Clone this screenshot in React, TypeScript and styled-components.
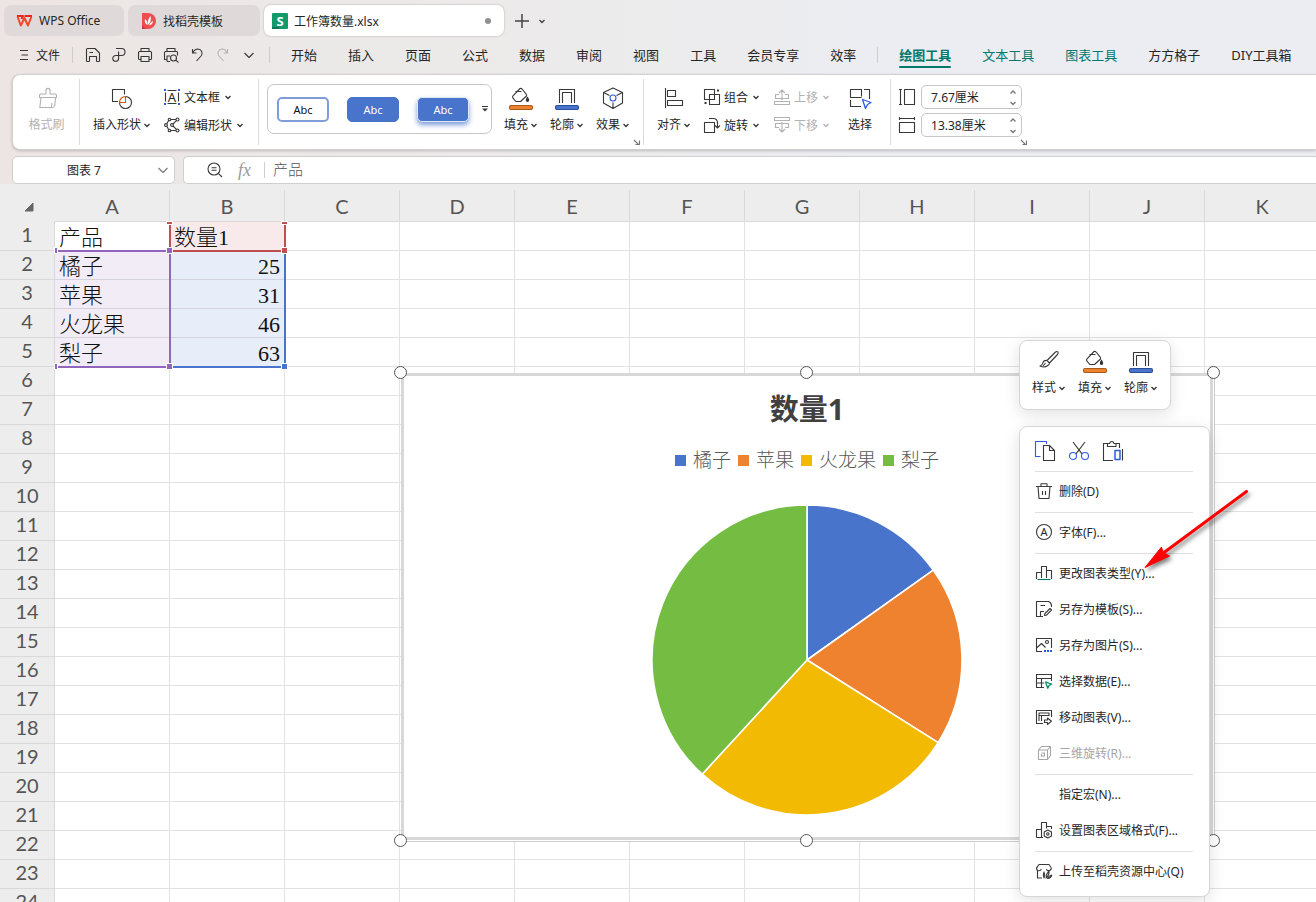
import React from "react";
import styled, { createGlobalStyle, css } from "styled-components";

const UI_FONT = `"Noto Sans", "Noto Sans CJK SC", sans-serif`;
const CELL_FONT = `"Liberation Serif", "Noto Sans CJK SC", serif`;
const INK = "#262626";
const MUTED = "#b2b2b2";
const BLUE = "#4874cb";
const ORANGE = "#ee822f";
const YELLOW = "#f2ba02";
const GREEN = "#75bd42";
const ACCENT = "#00796b";

const GlobalStyle = createGlobalStyle`
  *, *::before, *::after { box-sizing: border-box; }
  body { margin: 0; font-family: ${UI_FONT}; font-size: 12px; color: ${INK}; }
  button, input { font-family: inherit; font-size: inherit; color: inherit; }
  button { border: 0; padding: 0; background: none; cursor: default; }
  svg { display: block; flex: none; }
`;

/* ---------- icons ---------- */

const icons: Record<string, React.ReactNode> = {
  save: (
    <>
      <path d="M1.500 14.500V2.500a1 1 0 0 1 1-1H10L14.500 6V14.500" />
      <path d="M4.500 14.500V9.500H11.500V14.500M4.500 5.500H8M1.500 14.500H4.500M11.500 14.500H14.500" />
    </>
  ),
  share: <path d="M5 1.500H10.500a3.500 3.500 0 0 1 0 7H4.700a2.900 2.900 0 1 0 2.900 2.900V4.500" />,
  print: (
    <>
      <path d="M4 4.500V1.500H12V4.500M4 12.500H2.500a1 1 0 0 1-1-1V5.500a1 1 0 0 1 1-1H13.500a1 1 0 0 1 1 1v6a1 1 0 0 1-1 1H12" />
      <path d="M4 9.500H12V14.500H4Z" />
    </>
  ),
  preview: (
    <>
      <path d="M4 4.500V1.500H12V4.500M4 12.500H1.500V5.500a1 1 0 0 1 1-1H13.500a1 1 0 0 1 1 1v3M4 14.500V9H7M4 14.500H7" />
      <circle cx="10.500" cy="11" r="3" />
      <path d="M12.800 13.200 15.500 15.500" />
    </>
  ),
  undo: <path d="M3.500 2V6H7.500M3.800 6Q5.500 2 9 2A4.300 4.300 0 0 1 12.500 8.500L7.500 14" />,
  redo: <path d="M12.500 2V6H8.500M12.200 6Q10.500 2 7 2A4.300 4.300 0 0 0 3.500 8.500L8.500 14" />,
  more: <path d="M3.500 6 8 10.500 12.500 6" />,
  burger: <path d="M1 .5H9M2.500 5H9M1 9.500H9" />,
  brush: (
    <>
      <path d="M10 7V4.500a2.200 2.200 0 1 1 4 0V7h5a1.500 1.500 0 0 1 1.500 1.500V10.500H3.500V8.500A1.500 1.500 0 0 1 5 7Z" />
      <path d="M5 10.500 3.800 20.500H16.500Q18.500 20.500 18.800 18.500L19.500 10.500M16 16 15.500 20" />
    </>
  ),
  shapes: (
    <>
      <path d="M13.500 7.500V2.500H1.500V14.500H7" />
      <path d="M14.500 9.500A6 6 0 1 1 8.500 15.500" />
      <path stroke="#d4551a" d="M14.500 9.500V15.500H8.500A6 6 0 0 1 14.500 9.500Z" />
    </>
  ),
  textbox: (
    <>
      <path d="M1.500 3.500V12.500M14.500 3.500V12.500M3.500 1.500H12.500M3.500 14.500H12.500" />
      <text x="8" y="12.500" textAnchor="middle" fontSize="13" stroke="none" fill={INK}>A</text>
      <g fill="#2b5ce0" stroke="none">
        <path d="M0 0H2V2H0ZM14 0H16V2H14ZM0 14H2V16H0ZM14 14H16V16H14Z" />
      </g>
    </>
  ),
  editshape: (
    <>
      <path d="M6.800 2.500H12M4.600 3.600 2.800 6.800M2.800 9.200 4.600 12.400M6.800 13.500H12M12.400 3.700 9 7M9 9 12.400 12.300" />
      <circle cx="5.500" cy="2.500" r="1.300" />
      <circle cx="13.500" cy="2.500" r="1.500" />
      <circle cx="2" cy="8" r="1.400" />
      <circle cx="8" cy="8" r="1.400" />
      <circle cx="5.500" cy="13.500" r="1.300" />
      <circle cx="13.500" cy="13.500" r="1.500" />
    </>
  ),
  fill: (
    <>
      <path d="M5.500 4.500H11.500M10 1.500 3 8.800Q2 10 3 11.200L5.800 14.500H10.500L16.500 9Q17 8 16 6.800L12.500 2.500Q11.200 1 10 1.500Z" />
      <path fill="#333" stroke="none" d="M17.500 9.500c1 1.500 1.700 2.800 1.700 3.700a1.700 1.700 0 0 1-3.400 0c0-.9.700-2.200 1.700-3.700Z" />
      <rect x="-.5" y="18.500" width="23" height="4" rx="1.500" fill={ORANGE} stroke="#a85a1c" />
    </>
  ),
  outline: (
    <>
      <path d="M3.500 16V2.500H18.500V16M6.500 16V5.500H15.500V16" />
      <rect x="-.5" y="18.500" width="23" height="4" rx="1.500" fill={BLUE} stroke="#2c4f96" />
    </>
  ),
  effect: (
    <>
      <path d="M11 1 20.500 5.500V16L11 21.500 1.500 16V5.500ZM1.500 5.500 7.500 8.500M20.500 5.500 14.500 8.500M11 15.500V21.500" />
      <circle cx="11" cy="11" r="3" stroke="#2b5ce0" />
    </>
  ),
  align: <path d="M2.500 1V21M4.500 3.500H12.500V9.500H4.500ZM4.500 13.500H19.500V18.500H4.500Z" />,
  group: (
    <>
      <path d="M5.500 5.500H15.500V15.500H5.500ZM.5 .5H10.500V10.500H.5Z" />
      <path strokeWidth="2" d="M13 1.500H15M.5 14H2.500" />
    </>
  ),
  rotate: <path d="M.5 5.500H10.500V15.500H.5ZM5 1.500H9Q13.500 1.500 13.500 6V10.500M11 8.500 13.500 11 16 8.500" />,
  up: <path d="M8 11V1M5 4 8 1 11 4M5 5.500H1.500V9.500H14.500V5.500H11M.5 12.500H15.500V15.500H.5Z" />,
  down: <path d="M8 5V15M5 12 8 15 11 12M5 10.500H1.500V6.500H14.500V10.500H11M.5 .5H15.500V3.500H.5Z" />,
  select: (
    <>
      <path d="M12.500 2V9.500M15 2.500H20.500V12M12.500 2.500H1.500V10.500H12.500M1.500 13V19.500H12" />
      <path stroke="#2b5ce0" strokeWidth="1.300" d="M13.500 12.500 22 15.500 18.500 17.500 16.500 21.500Z" />
    </>
  ),
  height: <path d="M0 .5H3M1.500 .5V15.500M0 15.500H3M5.500 .5H15.500V15.500H5.500Z" />,
  width: <path d="M.5 0V3M.5 1.500H15.500M15.500 0V3M.5 5.500H15.500V15.500H.5Z" />,
  launcher: <path d="M0 1 4.500 5.500M5.500 1.500V5.500H1.500" />,
  zoomout: (
    <>
      <circle cx="7" cy="7" r="6" />
      <path d="M4.500 5.800H9.500M4.500 8.200H9.500M11.300 11.300 15 15" />
    </>
  ),
  paint: (
    <path d="M9 10.500 17.500 2Q19 1 20 2 20.500 3 19.500 4.500L11.500 13ZM9 10.500Q6 10 5 12.500 4.500 15 2 16 6 18 9.500 15.800 11.500 14.500 11.500 13M5 16 7.500 13" />
  ),
  copy: (
    <>
      <path stroke="#2b5ce0" d="M12.500 4V1.500H1.500V16.500H6.500" />
      <path d="M9.500 5.500H15.500L20.500 10.500V20.500H9.500ZM15.500 5.500V10.500H20.500" />
    </>
  ),
  cut: (
    <>
      <path d="M5 2 14 13.800M17 2 8 13.800" />
      <g stroke="#2b5ce0">
        <circle cx="5" cy="16" r="3.500" />
        <circle cx="17" cy="16" r="3.500" />
      </g>
    </>
  ),
  paste: (
    <>
      <path d="M6 3.500H1.500V20.500H11M14 3.500H17.500V8M5.500 6.500V3.500H7.500Q8 1.500 9.800 1.500 11.500 1.500 12 3.500H14V6.500Z" />
      <path d="M20.500 9V20.500" />
      <rect x="13" y="10.500" width="5" height="9" stroke="#2b5ce0" strokeWidth="1.500" />
    </>
  ),
  trash: <path d="M0 3.500H16M5 3.500V.8H11V3.500M2 3.500 3 15.500H13L14 3.500M6.500 8V12M9.500 8V12" />,
  font: (
    <>
      <circle cx="8" cy="8" r="7.500" />
      <text x="8" y="12" textAnchor="middle" fontSize="11" stroke="none" fill={INK}>A</text>
    </>
  ),
  chart: (
    <>
      <path d="M.5 14V7.500H5.500M5.500 13V1.500H10.500V13M10.500 5.500H15.500V14" />
      <path stroke={ACCENT} d="M1.500 14.500H14.500" />
    </>
  ),
  template: (
    <path d="M7 15.500H.5V.5H12.500Q15.500 1.500 15.500 5V6M4.500 15V10.500H8M4.500 4.500H9M8.500 14.500 9 12.500 14 7.500 15.500 9 10.500 14.200Z" />
  ),
  image: (
    <>
      <path d="M6 14.500H.5V1.500H15.500V11M.5 11 5.500 6.500 9.500 10.500" />
      <circle cx="11" cy="5" r="1.500" />
      <path stroke="#2b5ce0" strokeWidth="2" strokeDasharray="2 1" d="M8 14H16" />
    </>
  ),
  data: (
    <>
      <path d="M8 14.500H.5V1.500H15.500V8M.5 5.500H15.500M.5 10H8M5.500 5.500V14.500" />
      <path stroke="#0b8f68" strokeWidth="1.300" d="M9.500 9 15.500 11.200 13 12.500 11.800 15.200Z" />
    </>
  ),
  move: (
    <path d="M7 14.500H.5V1.500H15.500V8M3 12V4H13V7M3 6.500H13M5.500 6.500V12M8.500 11V13.500H11.500V15.500L15.500 12.200 11.500 9V11Z" />
  ),
  cube: (
    <path d="M2.500 5 5.500 1.500H14.500V10.500L11.500 14.500H2.500ZM2.500 5H11.500V14.500M11.500 5 14.500 1.500M5.500 8H8.500V11H5.500V9M6 11.500 5 10.500" />
  ),
  format: (
    <>
      <path d="M.5 15.500V7.500H5.500M7 15.500H.5M5.500 15.500V.5H10.500V6.500M10.500 4.500H15.500V7" />
      <path d="M11.800 8 15.500 10V14L11.800 16 8.200 14V10Z" />
      <circle cx="11.800" cy="12" r="1.200" />
    </>
  ),
  upload: (
    <>
      <path d="M6 15H1.500V7.500Q-.5 5.500 1.500 3.500L3 1.500H13L14.500 3.500Q16.500 6 13.500 7.500 11 8.200 10.500 6M1.500 7.500Q4 8.500 5.500 6" />
      <path d="M8 15Q6.500 12 8 9 9.500 12 8 15ZM10 15Q10 11 13 8 13.500 12 10 15ZM11.500 15.500Q13 12.500 15.800 12 15 15 11.500 15.500Z" />
    </>
  ),
};

type IconProps = { name: string; size?: number; color?: string };

const Icon = ({ name, size = 16, color = "#383838" }: IconProps) => (
  <svg
    width={size}
    height={size}
    viewBox={`0 0 ${size} ${size}`}
    fill="none"
    stroke={color}
    strokeWidth="1.100"
    strokeLinejoin="round"
    overflow="visible"
    aria-hidden="true"
  >
    {icons[name]}
  </svg>
);

const Caret = ({ color = "#383838", up = false }: { color?: string; up?: boolean }) => (
  <svg width="8" height="8" viewBox="0 0 8 8" fill="none" stroke={color} strokeWidth="1.400" aria-hidden="true">
    <path d={up ? "M1.500 5.500 4 3 6.500 5.500" : "M1.500 3 4 5.500 6.500 3"} />
  </svg>
);

/* ---------- window chrome ---------- */

const Window = styled.div`
  display: flex;
  flex-direction: column;
  height: 100vh;
  overflow: hidden;
  background: linear-gradient(90deg, #ede5e4 0, #ebe9e8 25%, #ecebeb 45%, #ecedf2 68%);
`;

const TabStrip = styled.header`
  display: flex;
  align-items: center;
  gap: 4px;
  flex: none;
  padding: 5px 4px 0;
`;

const Tab = styled.button<{ $width: number; $active?: boolean }>`
  display: flex;
  align-items: center;
  gap: 6px;
  width: ${(p) => p.$width}px;
  height: 31px;
  padding: 0 12px;
  border-radius: 7px;
  background: #dfdad9;
  white-space: nowrap;
  ${(p) =>
    p.$active &&
    css`
      padding: 0 13px 0 8px;
      background: #fff;
      box-shadow: 0 0 2px rgba(0, 0, 0, 0.3);
    `}
`;

const Dirty = styled.span`
  width: 6px;
  height: 6px;
  margin-left: auto;
  border-radius: 50%;
  background: #8f8f8f;
`;

const NewTab = styled.button`
  display: flex;
  align-items: center;
  gap: 8px;
  margin-left: 6px;
`;

const MenuBar = styled.div`
  display: flex;
  align-items: center;
  flex: none;
  height: 38px;
  padding-left: 19px;
  white-space: nowrap;
`;

const FileButton = styled.button`
  display: flex;
  align-items: center;
  gap: 7px;
`;

const Rule = styled.span<{ $before: number; $after: number }>`
  flex: none;
  width: 1px;
  height: 16px;
  margin: 0 ${(p) => p.$after}px 0 ${(p) => p.$before}px;
  background: #cfcccc;
`;

const QuickTools = styled.div`
  display: flex;
  gap: 10px;
`;

const Menus = styled.nav`
  display: flex;
  gap: 31px;
`;

const MenuTab = styled.button<{ $accent?: boolean; $current?: boolean }>`
  position: relative;
  height: 26px;
  font-size: 13px;
  line-height: 26px;
  color: ${(p) => (p.$accent ? ACCENT : INK)};
  font-weight: ${(p) => (p.$current ? 700 : 400)};
  ${(p) =>
    p.$current &&
    css`
      &::after {
        content: "";
        position: absolute;
        left: 0;
        right: 0;
        bottom: 0;
        height: 2px;
        border-radius: 1px;
        background: ${ACCENT};
      }
    `}
`;

/* ---------- ribbon ---------- */

const Ribbon = styled.section`
  display: flex;
  flex: none;
  height: 76px;
  margin-left: 12px;
  padding: 4px 0;
  border: 1px solid #d3d0d0;
  border-right: 0;
  border-radius: 8px 0 0 8px;
  background: #fff;
  box-shadow: 0 1px 3px rgba(0, 0, 0, 0.2);
  white-space: nowrap;
`;

const Group = styled.div<{ $left?: number; $right?: number; $last?: boolean }>`
  position: relative;
  display: flex;
  padding: 0 ${(p) => p.$right ?? 0}px 0 ${(p) => p.$left ?? 0}px;
  border-right: ${(p) => (p.$last ? 0 : 1)}px solid #dbdbdb;
`;

const BigButton = styled.button<{ $width: number; $muted?: boolean }>`
  display: flex;
  flex-direction: column;
  align-items: center;
  gap: 8px;
  width: ${(p) => p.$width}px;
  padding-top: 8px;
  color: ${(p) => (p.$muted ? MUTED : INK)};
`;

const Label = styled.span`
  display: flex;
  align-items: center;
  gap: 2px;
  line-height: 16px;
`;

const Stack = styled.div<{ $left?: number; $right?: number }>`
  display: flex;
  flex-direction: column;
  padding-top: 4px;
  margin: 0 ${(p) => p.$right ?? 0}px 0 ${(p) => p.$left ?? 0}px;
`;

const RowButton = styled.button<{ $muted?: boolean }>`
  display: flex;
  align-items: center;
  gap: 4px;
  height: 28px;
  color: ${(p) => (p.$muted ? MUTED : INK)};
`;

const Gallery = styled.div`
  display: flex;
  align-items: center;
  gap: 18px;
  height: 50px;
  margin: 5px 6px 0 0;
  padding: 0 2px 0 9px;
  border: 1px solid #c6c6c6;
  border-radius: 7px;
`;

const Swatch = styled.button<{ $look: "outline" | "solid" | "raised" }>`
  width: 52px;
  height: 25px;
  border: 1px solid ${BLUE};
  border-radius: 5px;
  font-size: 11px;
  color: #fff;
  background: ${BLUE};
  ${(p) =>
    p.$look === "outline" &&
    css`
      border: 2px solid #7f9ddb;
      background: #fff;
      color: #111;
    `}
  ${(p) =>
    p.$look === "raised" &&
    css`
      border-color: #dfe7f7;
      box-shadow: 0 3px 5px rgba(72, 116, 203, 0.7);
    `}
`;

const GalleryMore = styled.button`
  margin-left: -6px;
`;

const Launcher = styled.button`
  position: absolute;
  right: 3px;
  bottom: 0;
`;

const SizeRow = styled.label`
  display: flex;
  align-items: center;
  gap: 6px;
  height: 28px;
`;

const Spinner = styled.span`
  display: flex;
  align-items: center;
  width: 101px;
  height: 24px;
  padding: 0 4px 0 9px;
  border: 1px solid #c6c6c6;
  border-radius: 5px;
`;

const SpinnerInput = styled.input`
  flex: 1;
  min-width: 0;
  padding: 0;
  border: 0;
  background: none;
  outline: 0;
`;

const SpinnerArrows = styled.span`
  display: flex;
  flex-direction: column;
  gap: 3px;
`;

/* ---------- formula bar ---------- */

const FormulaRow = styled.div`
  display: flex;
  flex: none;
  gap: 8px;
  margin: 6px 0 0 12px;
`;

const NameBox = styled.div`
  display: flex;
  align-items: center;
  width: 163px;
  height: 28px;
  padding-right: 3px;
  border: 1px solid #cfcfcf;
  border-radius: 5px;
  background: #fff;
`;

const NameInput = styled.input`
  flex: 1;
  min-width: 0;
  padding: 0;
  border: 0;
  background: none;
  text-align: center;
  outline: 0;
`;

const FormulaBox = styled.div`
  display: flex;
  align-items: center;
  flex: 1;
  height: 28px;
  padding-left: 23px;
  border: 1px solid #cfcfcf;
  border-right: 0;
  border-radius: 5px 0 0 5px;
  background: #fff;
`;

const Fx = styled.span`
  margin-left: 15px;
  font: italic 18px/26px "Liberation Serif", serif;
  color: #9a9a9a;
`;

const FormulaInput = styled.input`
  flex: 1;
  padding: 0 0 4px;
  border: 0;
  background: none;
  outline: 0;
  font-size: 15px;
  font-weight: 300;
  color: #555;
`;

/* ---------- sheet ---------- */

const Sheet = styled.main`
  position: relative;
  flex: 1;
  min-height: 0;
  overflow: hidden;
  padding-top: 6px;
  background: linear-gradient(#ededed 38px, #fff 38px);
`;

const Canvas = styled.div`
  position: relative;
`;

const Grid = styled.table`
  width: 1320px;
  table-layout: fixed;
  border-collapse: separate;
  border-spacing: 0;
`;

const headCell = css`
  padding: 0;
  border: 0 solid #d9d9d9;
  border-width: 0 1px 1px 0;
  background: #ededed;
  color: #555;
  font-family: Lato, sans-serif;
  font-size: 20px;
  font-weight: 400;
`;

const ColHead = styled.th`
  ${headCell}
  height: 32px;
`;

const Corner = styled.th`
  ${headCell}
  border-width: 0;
  padding: 2px 21px 0 0;
  svg { margin-left: auto; }
`;

const RowHead = styled.th`
  ${headCell}
  height: 29px;
  line-height: 24px;
  padding-bottom: 4px;
`;

const Cell = styled.td<{ $tint?: string; $numeric?: boolean }>`
  height: 29px;
  padding: 3px 4px 0;
  border: 0 solid ${(p) => (p.$tint ? "#d4d2dc" : "#e2e2e2")};
  border-width: 0 1px 1px 0;
  background: ${(p) => p.$tint ?? "#fff"};
  color: #111;
  font-family: ${CELL_FONT};
  font-size: 22px;
  font-weight: 300;
  line-height: 25px;
  text-align: ${(p) => (p.$numeric ? "right" : "left")};
  white-space: nowrap;
`;

/* Coloured outline of a range that feeds the chart */
const Range = styled.div<{ $x: number; $y: number; $w: number; $h: number; $color: string; $sides: string }>`
  position: absolute;
  left: ${(p) => p.$x}px;
  top: ${(p) => p.$y}px;
  width: ${(p) => p.$w}px;
  height: ${(p) => p.$h}px;
  border: 0 solid ${(p) => p.$color};
  border-width: ${(p) => p.$sides};
`;

const Grip = styled.i<{ $x: number; $y: number; $color: string; $w?: number; $h?: number }>`
  position: absolute;
  left: ${(p) => p.$x}px;
  top: ${(p) => p.$y}px;
  width: ${(p) => p.$w ?? 7}px;
  height: ${(p) => p.$h ?? 7}px;
  border: 1px solid #fff;
  background: ${(p) => p.$color};
`;

/* ---------- chart ---------- */

const ChartFrame = styled.figure`
  position: absolute;
  left: 401px;
  top: 183px;
  display: flex;
  flex-direction: column;
  align-items: center;
  width: 812px;
  height: 467px;
  margin: 0;
  padding-top: 15px;
  border: 3px solid #d8d8d8;
  background: #fff;
  box-shadow: 1px 1px 0 #fff, 2px 2px 0 #ccced6;
`;

const ChartTitle = styled.figcaption`
  font-size: 29px;
  font-weight: 700;
  line-height: 36px;
  color: #404040;
`;

const Legend = styled.ul`
  display: flex;
  gap: 7px;
  margin: 20px 0 0;
  padding: 0;
  list-style: none;
`;

const LegendItem = styled.li<{ $color: string }>`
  display: flex;
  align-items: center;
  gap: 7px;
  font-size: 19px;
  font-weight: 300;
  line-height: 26px;
  color: #595959;
  &::before {
    content: "";
    width: 11px;
    height: 11px;
    background: ${(p) => p.$color};
  }
`;

const Pie = styled.svg`
  margin-top: 31px;
`;

const Handle = styled.i<{ $x: string; $y: string }>`
  position: absolute;
  left: ${(p) => p.$x};
  top: ${(p) => p.$y};
  width: 13px;
  height: 13px;
  margin: -7px;
  border: 1px solid #555;
  border-radius: 50%;
  background: #fff;
`;

/* ---------- floating menus ---------- */

const panel = css`
  position: absolute;
  left: 1019px;
  border: 1px solid #d6d6d6;
  border-radius: 8px;
  background: #fff;
  box-shadow: 0 4px 16px rgba(0, 0, 0, 0.12);
`;

const MiniBar = styled.div`
  ${panel}
  top: 150px;
  display: flex;
  height: 70px;
  padding: 1px 6px 0;
`;

const ContextMenu = styled.div`
  ${panel}
  top: 236px;
  width: 191px;
  padding: 2px 0 6px;
`;

const ClipboardRow = styled.div`
  display: flex;
  align-items: center;
  gap: 12px;
  height: 40px;
  padding: 4px 14px 0;
`;

const Separator = styled.hr`
  height: 1px;
  margin: 2px 16px 2px 15px;
  border: 0;
  background: #dfdfdf;
`;

const MenuItem = styled.button<{ $muted?: boolean }>`
  display: flex;
  align-items: center;
  gap: 7px;
  width: 100%;
  height: 36px;
  padding: 0 16px 2px;
  color: ${(p) => (p.$muted ? "#a6a6a6" : INK)};
  white-space: nowrap;
`;

const NoIcon = styled.span`
  width: 16px;
`;

const Arrow = styled.svg`
  position: absolute;
  left: 1134px;
  top: 290px;
  filter: drop-shadow(2px 3px 2px rgba(0, 0, 0, 0.5));
  pointer-events: none;
`;

/* ---------- data ---------- */

const columns = ["A", "B", "C", "D", "E", "F", "G", "H", "I", "J", "K"];
const rowNumbers = Array.from({ length: 24 }, (_, i) => i + 1);

const products = [
  { name: "橘子", amount: 25, color: BLUE },
  { name: "苹果", amount: 31, color: ORANGE },
  { name: "火龙果", amount: 46, color: YELLOW },
  { name: "梨子", amount: 63, color: GREEN },
];

const mainMenus = ["开始", "插入", "页面", "公式", "数据", "审阅", "视图", "工具", "会员专享", "效率"];

type Entry = { text: string; icon?: string; muted?: boolean } | null;
const contextEntries: Entry[] = [
  { text: "删除(D)", icon: "trash" },
  null,
  { text: "字体(F)...", icon: "font" },
  null,
  { text: "更改图表类型(Y)...", icon: "chart" },
  { text: "另存为模板(S)...", icon: "template" },
  { text: "另存为图片(S)...", icon: "image" },
  { text: "选择数据(E)...", icon: "data" },
  { text: "移动图表(V)...", icon: "move" },
  { text: "三维旋转(R)...", icon: "cube", muted: true },
  null,
  { text: "指定宏(N)..." },
  { text: "设置图表区域格式(F)...", icon: "format" },
  null,
  { text: "上传至稻壳资源中心(Q)", icon: "upload" },
];

const cellContent = (row: number, col: string) => {
  if (row === 1) return col === "A" ? "产品" : col === "B" ? "数量1" : "";
  const item = products[row - 2];
  if (!item) return "";
  return col === "A" ? item.name : col === "B" ? item.amount : "";
};

const cellTint = (row: number, col: string) => {
  if (row === 1 && col === "B") return "#f8eaea";
  if (row >= 2 && row <= 5 && col === "A") return "#f2ecf7";
  if (row >= 2 && row <= 5 && col === "B") return "#e8edfa";
  return undefined;
};

const pieSlices = () => {
  const total = products.reduce((sum, p) => sum + p.amount, 0);
  const radius = 155;
  let start = 0;
  return products.map((p) => {
    const end = start + (p.amount / total) * Math.PI * 2;
    const at = (a: number) => `${156 + radius * Math.sin(a)} ${156 - radius * Math.cos(a)}`;
    const d = `M156 156L${at(start)}A${radius} ${radius} 0 ${end - start > Math.PI ? 1 : 0} 1 ${at(end)}Z`;
    start = end;
    return <path key={p.name} d={d} fill={p.color} stroke="#fff" strokeWidth="1.600" strokeLinejoin="round" />;
  });
};

const Sized = ({ icon, label, value }: { icon: string; label: string; value: string }) => (
  <SizeRow>
    <Icon name={icon} />
    <Spinner>
      <SpinnerInput aria-label={label} defaultValue={value} />
      <SpinnerArrows>
        <Caret up color="#777" />
        <Caret color="#777" />
      </SpinnerArrows>
    </Spinner>
  </SizeRow>
);

export default function App() {
  return (
    <Window>
      <GlobalStyle />
      <TabStrip>
        <Tab $width={120}>
          <svg width="17" height="12" viewBox="0 0 17 12" fill="none" strokeWidth="2" strokeLinejoin="round" aria-hidden="true">
            <path stroke="#e8251f" d="M1 1H7L5.500 4" />
            <path stroke="#f0492c" d="M1.500 1.500 4.800 10.500 8.500 3 12 10.500 15.500 1.500" />
            <path stroke="#e8251f" d="M8.500 1H16" />
          </svg>
          WPS Office
        </Tab>
        <Tab $width={132}>
          <svg width="17" height="16" viewBox="0 0 17 16" aria-hidden="true">
            <path fill="#ef4e50" d="M2 0H8A8 8 0 0 1 8 16H2Z" />
            <path fill="#c93a40" d="M2 12 6 16H2Z" />
            <path fill="#fff" d="M7.500 12Q4 10 5 6 8 8 7.500 12ZM8 12Q7.500 6 10.500 3 12 8 8 12ZM9 12.500Q10 9 13 8 13 11.500 9 12.500Z" />
          </svg>
          找稻壳模板
        </Tab>
        <Tab $width={240} $active>
          <svg width="16" height="16" viewBox="0 0 16 16" aria-hidden="true">
            <rect width="16" height="16" rx="1" fill="#119b6b" />
            <path fill="#0b7a52" d="M0 14H7V16H0Z" />
            <text x="8" y="12.500" textAnchor="middle" fontSize="13" fontWeight="700" fill="#fff">S</text>
          </svg>
          工作簿数量.xlsx
          <Dirty />
        </Tab>
        <NewTab aria-label="新建">
          <svg width="16" height="16" viewBox="0 0 16 16" stroke="#444" strokeWidth="1.500" aria-hidden="true">
            <path d="M1 8H15M8 1V15" />
          </svg>
          <Caret color="#444" />
        </NewTab>
      </TabStrip>

      <MenuBar>
        <FileButton>
          <Icon name="burger" size={10} />
          文件
        </FileButton>
        <Rule $before={12} $after={12} />
        <QuickTools>
          {["save", "share", "print", "preview", "undo", "redo", "more"].map((name) => (
            <button key={name} aria-label={name}>
              <Icon name={name} color={name === "redo" ? MUTED : "#383838"} />
            </button>
          ))}
        </QuickTools>
        <Rule $before={12} $after={21} />
        <Menus>
          {mainMenus.map((m) => (
            <MenuTab key={m}>{m}</MenuTab>
          ))}
        </Menus>
        <Rule $before={21} $after={21} />
        <Menus>
          <MenuTab $accent $current>绘图工具</MenuTab>
          <MenuTab $accent>文本工具</MenuTab>
          <MenuTab $accent>图表工具</MenuTab>
          <MenuTab>方方格子</MenuTab>
          <MenuTab>DIY工具箱</MenuTab>
        </Menus>
      </MenuBar>

      <Ribbon>
        <Group $left={1}>
          <BigButton $width={65} $muted disabled>
            <Icon name="brush" size={22} color={MUTED} />
            <Label>格式刷</Label>
          </BigButton>
        </Group>
        <Group $left={10} $right={14}>
          <BigButton $width={64}>
            <Icon name="shapes" size={22} />
            <Label>插入形状<Caret /></Label>
          </BigButton>
          <Stack $left={10}>
            <RowButton><Icon name="textbox" />文本框<Caret /></RowButton>
            <RowButton><Icon name="editshape" />编辑形状<Caret /></RowButton>
          </Stack>
        </Group>
        <Group $left={8} $right={7}>
          <Gallery>
            <Swatch $look="outline">Abc</Swatch>
            <Swatch $look="solid">Abc</Swatch>
            <Swatch $look="raised">Abc</Swatch>
            <GalleryMore aria-label="更多样式">
              <svg width="8" height="8" viewBox="0 0 8 8" aria-hidden="true">
                <path d="M1 1.500H7" stroke="#383838" />
                <path d="M1 3.500H7L4 6.500Z" fill="#383838" />
              </svg>
            </GalleryMore>
          </Gallery>
          <BigButton $width={46}><Icon name="fill" size={22} /><Label>填充<Caret /></Label></BigButton>
          <BigButton $width={46}><Icon name="outline" size={22} /><Label>轮廓<Caret /></Label></BigButton>
          <BigButton $width={46}><Icon name="effect" size={22} /><Label>效果<Caret /></Label></BigButton>
          <Launcher aria-label="形状样式设置"><Icon name="launcher" size={6} color="#777" /></Launcher>
        </Group>
        <Group $left={7} $right={7}>
          <BigButton $width={46}><Icon name="align" size={22} /><Label>对齐<Caret /></Label></BigButton>
          <Stack $left={7}>
            <RowButton><Icon name="group" />组合<Caret /></RowButton>
            <RowButton><Icon name="rotate" />旋转<Caret /></RowButton>
          </Stack>
          <Stack $left={14} $right={7}>
            <RowButton $muted disabled><Icon name="up" color={MUTED} />上移<Caret color={MUTED} /></RowButton>
            <RowButton $muted disabled><Icon name="down" color={MUTED} />下移<Caret color={MUTED} /></RowButton>
          </Stack>
          <BigButton $width={46}><Icon name="select" size={22} /><Label>选择</Label></BigButton>
        </Group>
        <Group $left={8} $right={8} $last>
          <Stack>
            <Sized icon="height" label="高度" value="7.67厘米" />
            <Sized icon="width" label="宽度" value="13.38厘米" />
          </Stack>
          <Launcher aria-label="大小设置"><Icon name="launcher" size={6} color="#777" /></Launcher>
        </Group>
      </Ribbon>

      <FormulaRow>
        <NameBox>
          <NameInput aria-label="名称框" defaultValue="图表 7" />
          <button aria-label="展开名称"><Icon name="more" color="#777" /></button>
        </NameBox>
        <FormulaBox>
          <Icon name="zoomout" />
          <Fx>fx</Fx>
          <Rule $before={13} $after={8} />
          <FormulaInput aria-label="编辑栏" defaultValue="产品" />
        </FormulaBox>
      </FormulaRow>

      <Sheet>
        <Canvas>
          <Grid>
            <colgroup>
              <col width="55" />
              {columns.map((c) => (
                <col key={c} width="115" />
              ))}
            </colgroup>
            <thead>
              <tr>
                <Corner aria-label="全选">
                  <svg width="10" height="10" viewBox="0 0 10 10" aria-hidden="true">
                    <path d="M9 1V9H1Z" fill="#666" stroke="#666" strokeLinejoin="round" />
                  </svg>
                </Corner>
                {columns.map((c) => (
                  <ColHead key={c}>{c}</ColHead>
                ))}
              </tr>
            </thead>
            <tbody>
              {rowNumbers.map((r) => (
                <tr key={r}>
                  <RowHead>{r}</RowHead>
                  {columns.map((c) => (
                    <Cell key={c} $tint={cellTint(r, c)} $numeric={c === "B" && r > 1}>
                      {cellContent(r, c)}
                    </Cell>
                  ))}
                </tr>
              ))}
            </tbody>
          </Grid>

          <Range $x={169} $y={60} $w={117} $h={118} $color={BLUE} $sides="0 2px 2px 0" />
          <Range $x={169} $y={32} $w={117} $h={30} $color="#c0504d" $sides="0 2px 2px 2px" />
          <Range $x={55} $y={60} $w={116} $h={118} $color="#9366bd" $sides="2px 2px 2px 0" />
          <Grip $x={166} $y={31} $h={4} $color="#c0504d" />
          <Grip $x={281} $y={31} $h={4} $color="#c0504d" />
          <Grip $x={281} $y={57} $color="#c0504d" />
          <Grip $x={166} $y={57} $color="#9366bd" />
          <Grip $x={166} $y={173} $color="#9366bd" />
          <Grip $x={54} $y={57} $w={4} $color="#9366bd" />
          <Grip $x={54} $y={173} $w={4} $color="#9366bd" />
          <Grip $x={281} $y={173} $color={BLUE} />

          <ChartFrame>
            <ChartTitle>数量1</ChartTitle>
            <Legend>
              {products.map((p) => (
                <LegendItem key={p.name} $color={p.color}>{p.name}</LegendItem>
              ))}
            </Legend>
            <Pie width="312" height="312" viewBox="0 0 312 312" role="img" aria-label="数量1">
              {pieSlices()}
            </Pie>
            <Handle $x="-3px" $y="-3px" />
            <Handle $x="50%" $y="-3px" />
            <Handle $x="calc(100% + 4px)" $y="-3px" />
            <Handle $x="-3px" $y="calc(100% + 4px)" />
            <Handle $x="50%" $y="calc(100% + 4px)" />
            <Handle $x="calc(100% + 4px)" $y="calc(100% + 4px)" />
          </ChartFrame>

          <MiniBar>
            <BigButton $width={46}><Icon name="paint" size={22} /><Label>样式<Caret /></Label></BigButton>
            <BigButton $width={46}><Icon name="fill" size={22} /><Label>填充<Caret /></Label></BigButton>
            <BigButton $width={46}><Icon name="outline" size={22} /><Label>轮廓<Caret /></Label></BigButton>
          </MiniBar>

          <ContextMenu>
            <ClipboardRow>
              <button aria-label="复制"><Icon name="copy" size={22} /></button>
              <button aria-label="剪切"><Icon name="cut" size={22} /></button>
              <button aria-label="粘贴"><Icon name="paste" size={22} /></button>
            </ClipboardRow>
            <Separator />
            {contextEntries.map((e, i) =>
              e ? (
                <MenuItem key={e.text} $muted={e.muted} disabled={e.muted}>
                  {e.icon ? <Icon name={e.icon} color={e.muted ? "#a6a6a6" : "#383838"} /> : <NoIcon />}
                  {e.text}
                </MenuItem>
              ) : (
                <Separator key={i} />
              )
            )}
          </ContextMenu>

          <Arrow width="124" height="90" viewBox="0 0 124 90" aria-hidden="true">
            <path d="M112.500 11.500 28 74" stroke="#fe0000" strokeWidth="3" strokeLinecap="round" />
            <path d="M11 87.500 27.500 67 29 72.500 35.500 76Z" fill="#fe0000" stroke="#fe0000" strokeLinejoin="round" />
          </Arrow>
        </Canvas>
      </Sheet>
    </Window>
  );
}
